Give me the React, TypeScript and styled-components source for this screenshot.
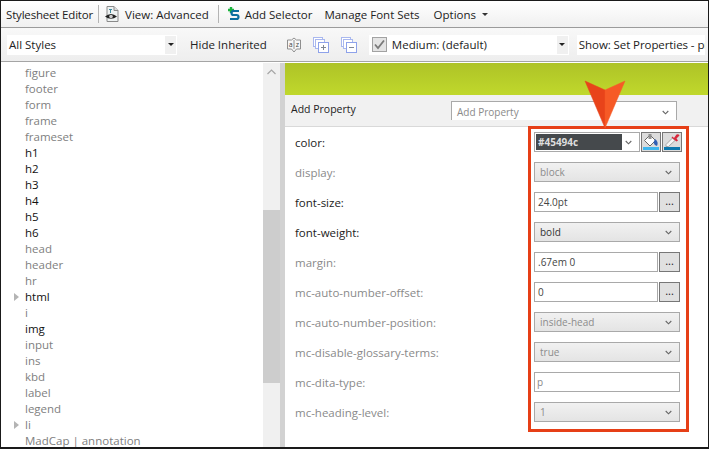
import { createGlobalStyle } from "styled-components";
import styled from "styled-components";

const GlobalStyle = createGlobalStyle`
  html, body {
    margin: 0;
    padding: 0;
    background: #fff;
  }
  body {
    font-family: "Open Sans", "Noto Sans", sans-serif;
    font-size: 11.5px;
    color: #222;
  }
`;

const Frame = styled.div`
  position: relative;
  width: 709px;
  height: 449px;
  box-sizing: border-box;
  border: 1px solid #1a1a1a;
  border-bottom-width: 2px;
  display: flex;
  flex-direction: column;
  overflow: hidden;
`;

const MenuBar = styled.div`
  height: 26px;
  flex: none;
  display: flex;
  align-items: center;
  padding-left: 5px;
  background: linear-gradient(#ffffff, #f0f0f0);
  border-bottom: 1px solid #9b9b9b;
`;

const MenuItem = styled.span<{ $gap?: number }>`
  margin-right: ${(p) => p.$gap ?? 0}px;
  white-space: nowrap;
  display: inline-flex;
  align-items: center;
`;

const EditorTitle = styled(MenuItem)`
  letter-spacing: -0.18px;
`;

const Separator = styled.span<{ $gap: number }>`
  width: 1px;
  height: 18px;
  background: #b4b4b4;
  margin-right: ${(p) => p.$gap}px;
  flex: none;
`;

const Caret = styled.span`
  width: 0;
  height: 0;
  margin-left: 6px;
  border-left: 3px solid transparent;
  border-right: 3px solid transparent;
  border-top: 3px solid #333;
`;

const FilterBar = styled.div`
  height: 33px;
  flex: none;
  display: flex;
  align-items: center;
  padding-left: 6px;
  background: linear-gradient(#f8f8f8, #eeeeee);
  border-bottom: 1px solid #a5a5a5;
`;

const ToolSelect = styled.div<{ $width: number; $gap: number }>`
  width: ${(p) => p.$width}px;
  margin-right: ${(p) => p.$gap}px;
  height: 20px;
  flex: none;
  display: flex;
  align-items: center;
  background: #fff;
  overflow: hidden;
  white-space: nowrap;
`;

const ToolSelectText = styled.span`
  flex: 1;
  padding-left: 2px;
`;

const MediumText = styled(ToolSelectText)`
  padding-left: 5px;
`;

const ShowText = styled(ToolSelectText)`
  letter-spacing: -0.08px;
`;

const ToolSelectArrow = styled.span`
  width: 11px;
  height: 18px;
  margin-right: 1px;
  flex: none;
  display: flex;
  align-items: center;
  justify-content: center;
  background: #f0f0f0;

  &::after {
    content: "";
    border-left: 3px solid transparent;
    border-right: 3px solid transparent;
    border-top: 3px solid #222;
  }
`;

const ToolIcon = styled.svg<{ $gap: number }>`
  width: 16px;
  height: 16px;
  flex: none;
  margin-right: ${(p) => p.$gap}px;
`;

const MediumCheck = styled.svg`
  width: 15px;
  height: 15px;
  margin-left: 3px;
  flex: none;
`;

const Body = styled.div`
  flex: 1;
  min-height: 0;
  display: flex;
  margin-top: 1px;
`;

const TreePane = styled.div`
  width: 262px;
  flex: none;
  padding-top: 2px;
  background: #fff;
  overflow: hidden;
`;

const TreeRow = styled.div<{ $set?: boolean }>`
  height: 16px;
  line-height: 16px;
  padding-left: 24px;
  position: relative;
  white-space: nowrap;
  color: ${(p) => (p.$set ? "#111" : "#808080")};
`;

const Expander = styled.span`
  position: absolute;
  left: 13px;
  top: 4px;
  width: 0;
  height: 0;
  border-top: 4px solid transparent;
  border-bottom: 4px solid transparent;
  border-left: 5px solid #b4b4b4;
`;

const ScrollTrack = styled.div`
  width: 17px;
  flex: none;
  background: #f0f0f0;
  display: flex;
  flex-direction: column;
  align-items: center;
`;

const ScrollUp = styled.svg`
  width: 9px;
  height: 6px;
  margin-top: 6px;
  flex: none;
`;

const ScrollThumb = styled.div`
  width: 100%;
  height: 173px;
  margin-top: 135px;
  background: #cdcdcd;
`;

const Divider = styled.div`
  width: 5px;
  flex: none;
  background: #d2d2d2;
`;

const EditorPane = styled.div`
  flex: 1;
  min-width: 0;
  display: flex;
  flex-direction: column;
`;

const GreenBand = styled.div`
  height: 32px;
  flex: none;
  background: linear-gradient(#aec327, #c0d82c);
`;

const AddRow = styled.div`
  height: 31px;
  flex: none;
  display: flex;
  align-items: center;
  justify-content: space-between;
  padding: 0 31px 0 6px;
  background: #f1f1f1;
  border-bottom: 1px solid #d9d9d9;
`;

const AddLabel = styled.span`
  font-size: 10.5px;
  margin-top: -3px;
`;

const AddSelect = styled.div`
  width: 226px;
  height: 19px;
  margin-top: 0;
  padding: 2px 7px 0 5px;
  box-sizing: border-box;
  display: flex;
  align-items: center;
  justify-content: space-between;
  background: #fff;
  border: 1px solid #a9a9a9;
  border-bottom: 0;
  color: #8a8a8a;
  font-size: 10px;
`;

const PropertyList = styled.div`
  flex: 1;
  display: flex;
  flex-direction: column;
  padding: 0 28px 0 10px;
  background: #fff;
`;

const PropertyRow = styled.div`
  height: 30px;
  flex: none;
  display: flex;
  align-items: center;
  justify-content: space-between;
`;

const PropertyName = styled.span<{ $inactive?: boolean }>`
  color: ${(p) => (p.$inactive ? "#8a8a8a" : "#222")};
`;

const Control = styled.div`
  width: 146px;
  height: 20px;
  flex: none;
  display: flex;
  gap: 1px;
`;

const Field = styled.div`
  flex: 1;
  min-width: 0;
  box-sizing: border-box;
  display: flex;
  align-items: center;
  padding-left: 3px;
  background: #fff;
  border: 1px solid #a9a9a9;
  font-size: 10px;
  color: #444;
`;

const FieldMuted = styled(Field)`
  color: #888;
  padding-left: 2px;
`;

const DropList = styled.div<{ $muted?: boolean }>`
  flex: 1;
  box-sizing: border-box;
  display: flex;
  align-items: center;
  justify-content: space-between;
  padding: 0 7px 0 5px;
  border: 1px solid #a9a9a9;
  background: linear-gradient(#f1f1f1, #e4e4e4);
  font-size: 10px;
  color: ${(p) => (p.$muted ? "#8c8c8c" : "#333")};
`;

const EllipsisButton = styled.div`
  width: 21px;
  flex: none;
  box-sizing: border-box;
  display: flex;
  align-items: center;
  justify-content: center;
  border: 1px solid #777;
  background: #e0e0e0;
  font-size: 11px;
  line-height: 12px;
  padding-bottom: 3px;
  color: #222;
`;

const ColorCombo = styled.div`
  width: 106px;
  flex: none;
  box-sizing: border-box;
  display: flex;
  align-items: center;
  justify-content: space-between;
  padding: 1px 7px 1px 1px;
  border: 1px solid #a9a9a9;
  background: #fff;
`;

const ColorValue = styled.span`
  width: 86px;
  height: 100%;
  box-sizing: border-box;
  padding-left: 2px;
  display: flex;
  align-items: center;
  background: #45494c;
  color: #dedede;
  font-size: 10px;
  font-weight: 700;
`;

const ColorButton = styled.div`
  width: 20px;
  flex: none;
  box-sizing: border-box;
  border: 1px solid #777;
  background: #dcdcdc;
`;

const Chevron = styled.svg`
  width: 7px;
  height: 5px;
  flex: none;
`;

const CalloutBox = styled.div`
  position: absolute;
  left: 527px;
  top: 125px;
  width: 161px;
  height: 306px;
  box-sizing: border-box;
  border: 3px solid #e63f17;
  pointer-events: none;
`;

const CalloutArrow = styled.svg`
  position: absolute;
  left: 583px;
  top: 79px;
  width: 42px;
  height: 49px;
`;

type Prop = {
  name: string;
  kind: "color" | "drop" | "text" | "more";
  value: string;
  inactive?: boolean;
};

const treeItems: { label: string; set?: boolean; expand?: boolean }[] = [
  { label: "figure" },
  { label: "footer" },
  { label: "form" },
  { label: "frame" },
  { label: "frameset" },
  { label: "h1", set: true },
  { label: "h2", set: true },
  { label: "h3", set: true },
  { label: "h4", set: true },
  { label: "h5", set: true },
  { label: "h6", set: true },
  { label: "head" },
  { label: "header" },
  { label: "hr" },
  { label: "html", set: true, expand: true },
  { label: "i" },
  { label: "img", set: true },
  { label: "input" },
  { label: "ins" },
  { label: "kbd" },
  { label: "label" },
  { label: "legend" },
  { label: "li", expand: true },
  { label: "MadCap | annotation" },
];

const properties: Prop[] = [
  { name: "color:", kind: "color", value: "#45494c" },
  { name: "display:", kind: "drop", value: "block", inactive: true },
  { name: "font-size:", kind: "more", value: "24.0pt" },
  { name: "font-weight:", kind: "drop", value: "bold" },
  { name: "margin:", kind: "more", value: ".67em 0", inactive: true },
  { name: "mc-auto-number-offset:", kind: "more", value: "0", inactive: true },
  { name: "mc-auto-number-position:", kind: "drop", value: "inside-head", inactive: true },
  { name: "mc-disable-glossary-terms:", kind: "drop", value: "true", inactive: true },
  { name: "mc-dita-type:", kind: "text", value: "p", inactive: true },
  { name: "mc-heading-level:", kind: "drop", value: "1", inactive: true },
];

function ChevronDown() {
  return (
    <Chevron viewBox="0 0 7 5">
      <path d="M0.7 1 L3.5 3.8 L6.3 1" fill="none" stroke="#666" strokeWidth="1.1" />
    </Chevron>
  );
}

function CopyIcon({ minus, gap }: { minus?: boolean; gap: number }) {
  return (
    <ToolIcon $gap={gap} viewBox="0 0 16 16">
      <rect x="0.5" y="0.5" width="9" height="9" fill="#fff" stroke="#a9b8ef" />
      <rect x="2.5" y="2.5" width="9" height="9" fill="#fff" stroke="#a9b8ef" />
      <rect x="5.5" y="5.5" width="10" height="10" fill="#fff" stroke="#8ea2ea" />
      <path d={minus ? "M8 10.5 H13" : "M8 10.5 H13 M10.5 8 V13"} stroke="#7f8794" />
    </ToolIcon>
  );
}

function renderControl(p: Prop) {
  if (p.kind === "color") {
    return (
      <Control>
        <ColorCombo>
          <ColorValue>{p.value}</ColorValue>
          <ChevronDown />
        </ColorCombo>
        <ColorButton>
          <svg width="18" height="18" viewBox="0 0 18 18">
            <path d="M2.5 7.5 L8 2 L13.5 7.5 L8 13 Z" fill="#fff" stroke="#666" />
            <path d="M6.5 1 h3 v5 h-3 Z" fill="#8f8f8f" />
            <path d="M13 6 q4 3 2 7 q-3 -1 -3.5 -3.5 Z" fill="#2f5fb5" />
            <rect x="1" y="14" width="16" height="3" fill="#3fb6ee" />
          </svg>
        </ColorButton>
        <ColorButton>
          <svg width="18" height="18" viewBox="0 0 18 18">
            <path d="M3 11.5 L9.5 5 L12 7.5 L5.5 13.5 L3 13.5 Z" fill="#f6f6f6" stroke="#a5a5a5" />
            <path d="M9.5 3.5 L11 5 L13.5 1.5 Q15.5 0.5 16.5 2.5 L13.5 5.5 L15 7.5 L13.5 8.5 L8.5 4.5 Z" fill="#d8283c" />
            <rect x="1" y="14" width="16" height="3" fill="#0d77ad" />
          </svg>
        </ColorButton>
      </Control>
    );
  }
  if (p.kind === "drop") {
    return (
      <Control>
        <DropList $muted={p.inactive}>
          {p.value}
          <ChevronDown />
        </DropList>
      </Control>
    );
  }
  if (p.kind === "more") {
    return (
      <Control>
        <Field>{p.value}</Field>
        <EllipsisButton>...</EllipsisButton>
      </Control>
    );
  }
  return (
    <Control>
      <FieldMuted>{p.value}</FieldMuted>
    </Control>
  );
}

export default function App() {
  return (
    <Frame>
      <GlobalStyle />
      <MenuBar>
        <EditorTitle $gap={5}>Stylesheet Editor</EditorTitle>
        <Separator $gap={5} />
        <ToolIcon $gap={5} viewBox="0 0 16 16">
          <path d="M3 0.5 H10 L14 4.5 V15.5 H3 Z" fill="#eef2f2" stroke="#8a8a8a" />
          <path d="M10 0.5 V4.5 H14" fill="#ddd" stroke="#8a8a8a" />
          <path d="M5 3.5 H8 M6.5 3.5 V7" stroke="#3c8ba0" />
          <path d="M1 10.5 Q7 5.5 13 10.5 Q7 15 1 10.5 Z" fill="#222" />
          <circle cx="7" cy="10.5" r="1.8" fill="#ccc" />
        </ToolIcon>
        <MenuItem $gap={9}>View: Advanced</MenuItem>
        <Separator $gap={8} />
        <ToolIcon $gap={2} viewBox="0 0 16 16">
          <path d="M4 1 V7 M1 4 H7" stroke="#19b33c" strokeWidth="2.4" />
          <path d="M12 5 H6.5 Q4.5 5 4.5 7 Q4.5 9 6.5 9 H9.5 Q11.5 9 11.5 11 Q11.5 13 9.5 13 H3" fill="none" stroke="#0c6f9f" strokeWidth="2.2" />
        </ToolIcon>
        <MenuItem $gap={12}>Add Selector</MenuItem>
        <MenuItem $gap={14}>Manage Font Sets</MenuItem>
        <MenuItem>
          Options
          <Caret />
        </MenuItem>
      </MenuBar>
      <FilterBar>
        <ToolSelect $width={170} $gap={13}>
          <ToolSelectText>All Styles</ToolSelectText>
          <ToolSelectArrow />
        </ToolSelect>
        <MenuItem $gap={19}>Hide Inherited</MenuItem>
        <ToolIcon $gap={11} viewBox="0 0 16 16">
          <path d="M1.5 3 H5.5 L8 1 L10.5 3 H14.5 V12 H10.5 L8 15 L5.5 12 H1.5 Z" fill="#f7f7f7" stroke="#8f8f8f" />
          <path d="M8 3 V12" stroke="#8f8f8f" />
          <text x="4.6" y="10" fontSize="7" textAnchor="middle" fill="#444">a</text>
          <text x="11.4" y="10" fontSize="7" textAnchor="middle" fill="#444">z</text>
        </ToolIcon>
        <CopyIcon gap={12} />
        <CopyIcon minus gap={12} />
        <ToolSelect $width={200} $gap={8}>
          <MediumCheck viewBox="0 0 15 15">
            <rect x="0.5" y="0.5" width="14" height="14" fill="#e4e4e4" stroke="#a2a2a2" />
            <path d="M3 7.5 L6 11 L12 3.5" fill="none" stroke="#7a7a7a" strokeWidth="1.8" />
          </MediumCheck>
          <MediumText>Medium: (default)</MediumText>
          <ToolSelectArrow />
        </ToolSelect>
        <ToolSelect $width={128} $gap={0}>
          <ShowText>Show: Set Properties - properties</ShowText>
        </ToolSelect>
      </FilterBar>
      <Body>
        <TreePane>
          {treeItems.map((item) => (
            <TreeRow key={item.label} $set={item.set}>
              {item.expand && <Expander />}
              {item.label}
            </TreeRow>
          ))}
        </TreePane>
        <ScrollTrack>
          <ScrollUp viewBox="0 0 9 6">
            <path d="M0.5 5 L4.5 1 L8.5 5" fill="none" stroke="#a5a5a5" strokeWidth="1.2" />
          </ScrollUp>
          <ScrollThumb />
        </ScrollTrack>
        <Divider />
        <EditorPane>
          <GreenBand />
          <AddRow>
            <AddLabel>Add Property</AddLabel>
            <AddSelect>
              Add Property
              <ChevronDown />
            </AddSelect>
          </AddRow>
          <PropertyList>
            {properties.map((p) => (
              <PropertyRow key={p.name}>
                <PropertyName $inactive={p.inactive}>{p.name}</PropertyName>
                {renderControl(p)}
              </PropertyRow>
            ))}
          </PropertyList>
        </EditorPane>
      </Body>
      <CalloutBox />
      <CalloutArrow viewBox="0 0 42 49">
        <path d="M1 1 L21 10 L21 48 Z" fill="#e8431a" stroke="#e8431a" strokeWidth="0.5" strokeLinejoin="round" />
        <path d="M41 1 L21 10 L21 48 Z" fill="#f65a26" stroke="#f65a26" strokeWidth="0.5" strokeLinejoin="round" />
      </CalloutArrow>
    </Frame>
  );
}
